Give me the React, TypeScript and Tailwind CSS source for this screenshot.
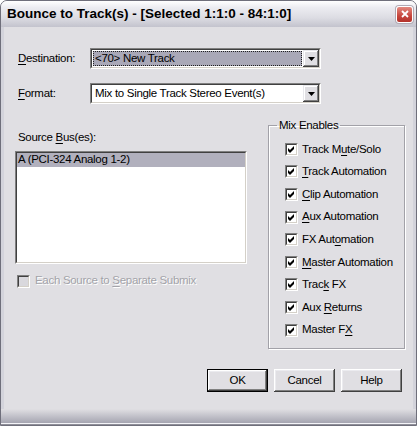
import type { ReactNode } from "react";

const U = ({ children }: { children: ReactNode }) => (
  <span className="underline decoration-1 underline-offset-[2px]">{children}</span>
);

const Check = ({ disabled = false }: { disabled?: boolean }) => (
  <span className="flex h-[13px] w-[13px] shrink-0 border border-t-[#808080] border-l-[#808080] border-r-white border-b-white">
    <span
      className={`flex flex-1 items-center justify-center border border-t-[#404040] border-l-[#404040] border-r-[#d4d0c8] border-b-[#d4d0c8] ${
        disabled ? "bg-[#d9d8dd]" : "bg-white"
      }`}
    >
      {!disabled && (
        <svg viewBox="0 0 9 9" className="h-[9px] w-[9px]">
          <polygon points="1,3 3,5 7,1 7,4 3,8 1,6" fill="#000" />
        </svg>
      )}
    </span>
  </span>
);

const DropButton = () => (
  <div className="flex h-full w-[16px] items-center justify-center bg-[#e0dfe3] shadow-[inset_-1px_-1px_0_#404040,inset_1px_1px_0_#e8e8ec,inset_-2px_-2px_0_#808080,inset_2px_2px_0_#ffffff]">
    <svg viewBox="0 0 7 4" className="h-[4px] w-[7px]">
      <polygon points="0,0 7,0 3.5,4" fill="#000" />
    </svg>
  </div>
);

const Combo = ({ value, selected = false }: { value: string; selected?: boolean }) => (
  <div className="flex h-[21px] w-[231px] border border-t-[#808080] border-l-[#808080] border-r-white border-b-white">
    <div className="flex flex-1 items-stretch border border-t-[#404040] border-l-[#404040] border-r-[#d4d0c8] border-b-[#d4d0c8] bg-white">
      <div className="flex flex-1 p-[1px]">
        {selected ? (
          <div className="flex flex-1 items-center border border-dotted border-[#202020] bg-[#a9a8b7] pl-[1px]">
            {value}
          </div>
        ) : (
          <div className="flex flex-1 items-center pl-[2px]">{value}</div>
        )}
      </div>
      <DropButton />
    </div>
  </div>
);

const Button = ({ label, isDefault = false }: { label: string; isDefault?: boolean }) => (
  <div className={`h-[23px] w-[61px] ${isDefault ? "border border-black" : ""}`}>
    <div className="flex h-full w-full items-center justify-center bg-[#e0dfe3] shadow-[inset_-1px_-1px_0_#404040,inset_1px_1px_0_#ffffff,inset_-2px_-2px_0_#808080,inset_2px_2px_0_#ebebef]">
      {label}
    </div>
  </div>
);

const mixEnables: ReactNode[] = [
  <>Track M<U>u</U>te/Solo</>,
  <><U>T</U>rack Automation</>,
  <><U>C</U>lip Automation</>,
  <><U>A</U>ux Automation</>,
  <>FX Aut<U>o</U>mation</>,
  <><U>M</U>aster Automation</>,
  <>Trac<U>k</U> FX</>,
  <>Aux <U>R</U>eturns</>,
  <>Master F<U>X</U></>,
];

export default function App() {
  return (
    <div className="flex h-[426px] w-[417px] flex-col overflow-hidden rounded-t-[7px] border border-[#6f6f7b] bg-[#e0dfe3] font-['Liberation_Sans',Arial,sans-serif] text-[11.5px] tracking-[-0.3px] text-black">
      {/* Title bar */}
      <div className="flex h-[26px] shrink-0 items-center justify-between bg-[linear-gradient(to_bottom,#ffffff_0%,#ececf1_25%,#dcdce3_65%,#c3c3cd_100%)] pl-[6px] pr-[3px]">
        <span className="text-[13.5px] font-bold tracking-normal">Bounce to Track(s) - [Selected 1:1:0 - 84:1:0]</span>
        <div className="flex h-[17px] w-[17px] items-center justify-center rounded-[3px] border border-white bg-[linear-gradient(to_bottom,#e38a80,#c6453c_60%,#b3322b)] shadow-[0_0_0_1px_#b0aab4]">
          <svg viewBox="0 0 8 8" className="h-[8px] w-[8px]">
            <path d="M1 1 L7 7 M7 1 L1 7" stroke="#fff" strokeWidth="1.8" />
          </svg>
        </div>
      </div>

      {/* Body */}
      <div className="flex flex-1 flex-col border-x-[3px] border-x-[#d3d3db] pl-[11px] pr-[8px] pt-[21px]">
        <div className="flex h-[21px] items-center">
          <span className="w-[75px] pl-[3px]"><U>D</U>estination:</span>
          <Combo value="<70> New Track" selected />
        </div>
        <div className="mt-[14px] flex h-[21px] items-center">
          <span className="w-[75px] pl-[3px]"><U>F</U>ormat:</span>
          <Combo value="Mix to Single Track Stereo Event(s)" />
        </div>

        <div className="mt-[14px] flex justify-between">
          {/* Source buses */}
          <div className="flex w-[232px] flex-col">
            <span className="mt-[12px] h-[14px] pl-[3px] leading-[14px]">Source <U>B</U>us(es):</span>
            <div className="mt-[7px] flex h-[113px] border border-t-[#808080] border-l-[#808080] border-r-white border-b-white">
              <div className="flex flex-1 flex-col border border-t-[#404040] border-l-[#404040] border-r-[#d4d0c8] border-b-[#d4d0c8] bg-white">
                <div className="flex h-[14px] items-center bg-[#b1b0bd] pl-[1px]">A (PCI-324 Analog 1-2)</div>
              </div>
            </div>
            <div className="mt-[10px] flex h-[14px] items-center gap-[5px] pl-[2px] text-[#a3a3a9] [text-shadow:1px_1px_0_#ffffff]">
              <Check disabled />
              <span>Each Source to <U>S</U>eparate Submix</span>
            </div>
          </div>

          {/* Mix enables */}
          <fieldset className="h-[231px] w-[137px] border border-[#a2a1a8] shadow-[inset_1px_1px_0_#ffffff,1px_1px_0_#ffffff]">
            <legend className="ml-[8px] px-[2px] leading-[14px]">Mix Enables</legend>
            <div className="pl-[16px] pt-[6px]">
              {mixEnables.map((label, i) => (
                <div key={i} className="flex h-[22.6px] items-center gap-[4px]">
                  <Check />
                  <span>{label}</span>
                </div>
              ))}
            </div>
          </fieldset>
        </div>

        <div className="mt-[20px] flex justify-end gap-[6px] pr-[3px]">
          <Button label="OK" isDefault />
          <Button label="Cancel" />
          <Button label="Help" />
        </div>
      </div>

      {/* Bottom frame */}
      <div className="h-[14px] shrink-0 bg-[linear-gradient(to_bottom,#e0dfe3,#a5a5b1)]" />
      <div className="h-[1px] shrink-0 bg-[#f4f4f8]" />
      <div className="h-[1px] shrink-0 bg-[#8f8f99]" />
    </div>
  );
}
